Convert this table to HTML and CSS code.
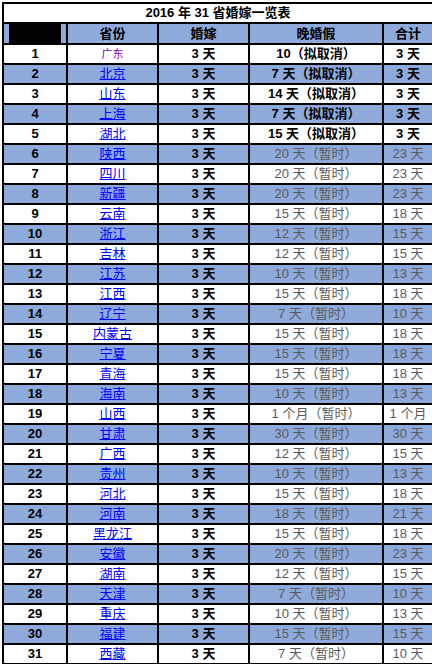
FILE: index.html
```html
<!DOCTYPE html>
<html>
<head>
<meta charset="utf-8">
<link rel="stylesheet" href="styles.css">
</head>
<body>
<table class="tbl">
<colgroup>
<col class="c1"><col class="c2"><col class="c3"><col class="c4"><col class="c5">
</colgroup>
<tr class="title"><td colspan="5">2016 年 31 省婚嫁一览表</td></tr>
<tr class="head"><td class="blk"><div class="blackbox"></div></td><td>省份</td><td>婚嫁</td><td>晚婚假</td><td>合计</td></tr>
<tr><td class="n">1</td><td><a class="visited">广东</a></td><td class="b">3 天</td><td class="b">10（拟取消）</td><td class="b">3 天</td></tr>
<tr class="alt"><td class="n">2</td><td><a>北京</a></td><td class="b">3 天</td><td class="b">7 天（拟取消）</td><td class="b">3 天</td></tr>
<tr><td class="n">3</td><td><a>山东</a></td><td class="b">3 天</td><td class="b">14 天（拟取消）</td><td class="b">3 天</td></tr>
<tr class="alt"><td class="n">4</td><td><a>上海</a></td><td class="b">3 天</td><td class="b">7 天（拟取消）</td><td class="b">3 天</td></tr>
<tr><td class="n">5</td><td><a>湖北</a></td><td class="b">3 天</td><td class="b">15 天（拟取消）</td><td class="b">3 天</td></tr>
<tr class="alt"><td class="n">6</td><td><a>陕西</a></td><td class="b">3 天</td><td class="g">20 天（暂时）</td><td class="g">23 天</td></tr>
<tr><td class="n">7</td><td><a>四川</a></td><td class="b">3 天</td><td class="g">20 天（暂时）</td><td class="g">23 天</td></tr>
<tr class="alt"><td class="n">8</td><td><a>新疆</a></td><td class="b">3 天</td><td class="g">20 天（暂时）</td><td class="g">23 天</td></tr>
<tr><td class="n">9</td><td><a>云南</a></td><td class="b">3 天</td><td class="g">15 天（暂时）</td><td class="g">18 天</td></tr>
<tr class="alt"><td class="n">10</td><td><a>浙江</a></td><td class="b">3 天</td><td class="g">12 天（暂时）</td><td class="g">15 天</td></tr>
<tr><td class="n">11</td><td><a>吉林</a></td><td class="b">3 天</td><td class="g">12 天（暂时）</td><td class="g">15 天</td></tr>
<tr class="alt"><td class="n">12</td><td><a>江苏</a></td><td class="b">3 天</td><td class="g">10 天（暂时）</td><td class="g">13 天</td></tr>
<tr><td class="n">13</td><td><a>江西</a></td><td class="b">3 天</td><td class="g">15 天（暂时）</td><td class="g">18 天</td></tr>
<tr class="alt"><td class="n">14</td><td><a>辽宁</a></td><td class="b">3 天</td><td class="g">7 天（暂时）</td><td class="g">10 天</td></tr>
<tr><td class="n">15</td><td><a>内蒙古</a></td><td class="b">3 天</td><td class="g">15 天（暂时）</td><td class="g">18 天</td></tr>
<tr class="alt"><td class="n">16</td><td><a>宁夏</a></td><td class="b">3 天</td><td class="g">15 天（暂时）</td><td class="g">18 天</td></tr>
<tr><td class="n">17</td><td><a>青海</a></td><td class="b">3 天</td><td class="g">15 天（暂时）</td><td class="g">18 天</td></tr>
<tr class="alt"><td class="n">18</td><td><a>海南</a></td><td class="b">3 天</td><td class="g">10 天（暂时）</td><td class="g">13 天</td></tr>
<tr><td class="n">19</td><td><a>山西</a></td><td class="b">3 天</td><td class="g">1 个月（暂时）</td><td class="g">1 个月</td></tr>
<tr class="alt"><td class="n">20</td><td><a>甘肃</a></td><td class="b">3 天</td><td class="g">30 天（暂时）</td><td class="g">30 天</td></tr>
<tr><td class="n">21</td><td><a>广西</a></td><td class="b">3 天</td><td class="g">12 天（暂时）</td><td class="g">15 天</td></tr>
<tr class="alt"><td class="n">22</td><td><a>贵州</a></td><td class="b">3 天</td><td class="g">10 天（暂时）</td><td class="g">13 天</td></tr>
<tr><td class="n">23</td><td><a>河北</a></td><td class="b">3 天</td><td class="g">15 天（暂时）</td><td class="g">18 天</td></tr>
<tr class="alt"><td class="n">24</td><td><a>河南</a></td><td class="b">3 天</td><td class="g">18 天（暂时）</td><td class="g">21 天</td></tr>
<tr><td class="n">25</td><td><a>黑龙江</a></td><td class="b">3 天</td><td class="g">15 天（暂时）</td><td class="g">18 天</td></tr>
<tr class="alt"><td class="n">26</td><td><a>安徽</a></td><td class="b">3 天</td><td class="g">20 天（暂时）</td><td class="g">23 天</td></tr>
<tr><td class="n">27</td><td><a>湖南</a></td><td class="b">3 天</td><td class="g">12 天（暂时）</td><td class="g">15 天</td></tr>
<tr class="alt"><td class="n">28</td><td><a>天津</a></td><td class="b">3 天</td><td class="g">7 天（暂时）</td><td class="g">10 天</td></tr>
<tr><td class="n">29</td><td><a>重庆</a></td><td class="b">3 天</td><td class="g">10 天（暂时）</td><td class="g">13 天</td></tr>
<tr class="alt"><td class="n">30</td><td><a>福建</a></td><td class="b">3 天</td><td class="g">15 天（暂时）</td><td class="g">15 天</td></tr>
<tr><td class="n">31</td><td><a>西藏</a></td><td class="b">3 天</td><td class="g">7 天（暂时）</td><td class="g">10 天</td></tr>
</table>
</body>
</html>
```
FILE: styles.css
```css
html, body {
  margin: 0;
  padding: 0;
  background: #ffffff;
}
body {
  padding: 2px 0 0 2px;
  font-family: "Liberation Sans", "Noto Sans CJK SC", sans-serif;
  font-size: 13px;
  color: #000;
}
.tbl {
  border-collapse: collapse;
  table-layout: fixed;
  width: 430px;
}
.c1 { width: 64px; }
.c2 { width: 91px; }
.c3 { width: 91px; }
.c4 { width: 134px; }
.c5 { width: 50px; }
.tbl td {
  border: 2px solid #000;
  height: 18px;
  padding: 0;
  text-align: center;
  vertical-align: middle;
  line-height: 18px;
  white-space: nowrap;
  overflow: hidden;
}
.title td {
  font-weight: bold;
  font-size: 13px;
}
.head td {
  background: #8eaadb;
  font-weight: bold;
}
.head .blk {
  padding: 0 5px;
}
.blackbox {
  background: #000;
  height: 19px;
  width: 100%;
}
.alt td {
  background: #8eaadb;
}
.n {
  font-weight: bold;
}
a {
  color: #0000ff;
  text-decoration: underline;
}
a.visited {
  color: #8000c0;
  font-size: 11px;
  text-decoration: none;
}
.b {
  font-weight: bold;
}
.g {
  color: #5a5a5a;
}
```
